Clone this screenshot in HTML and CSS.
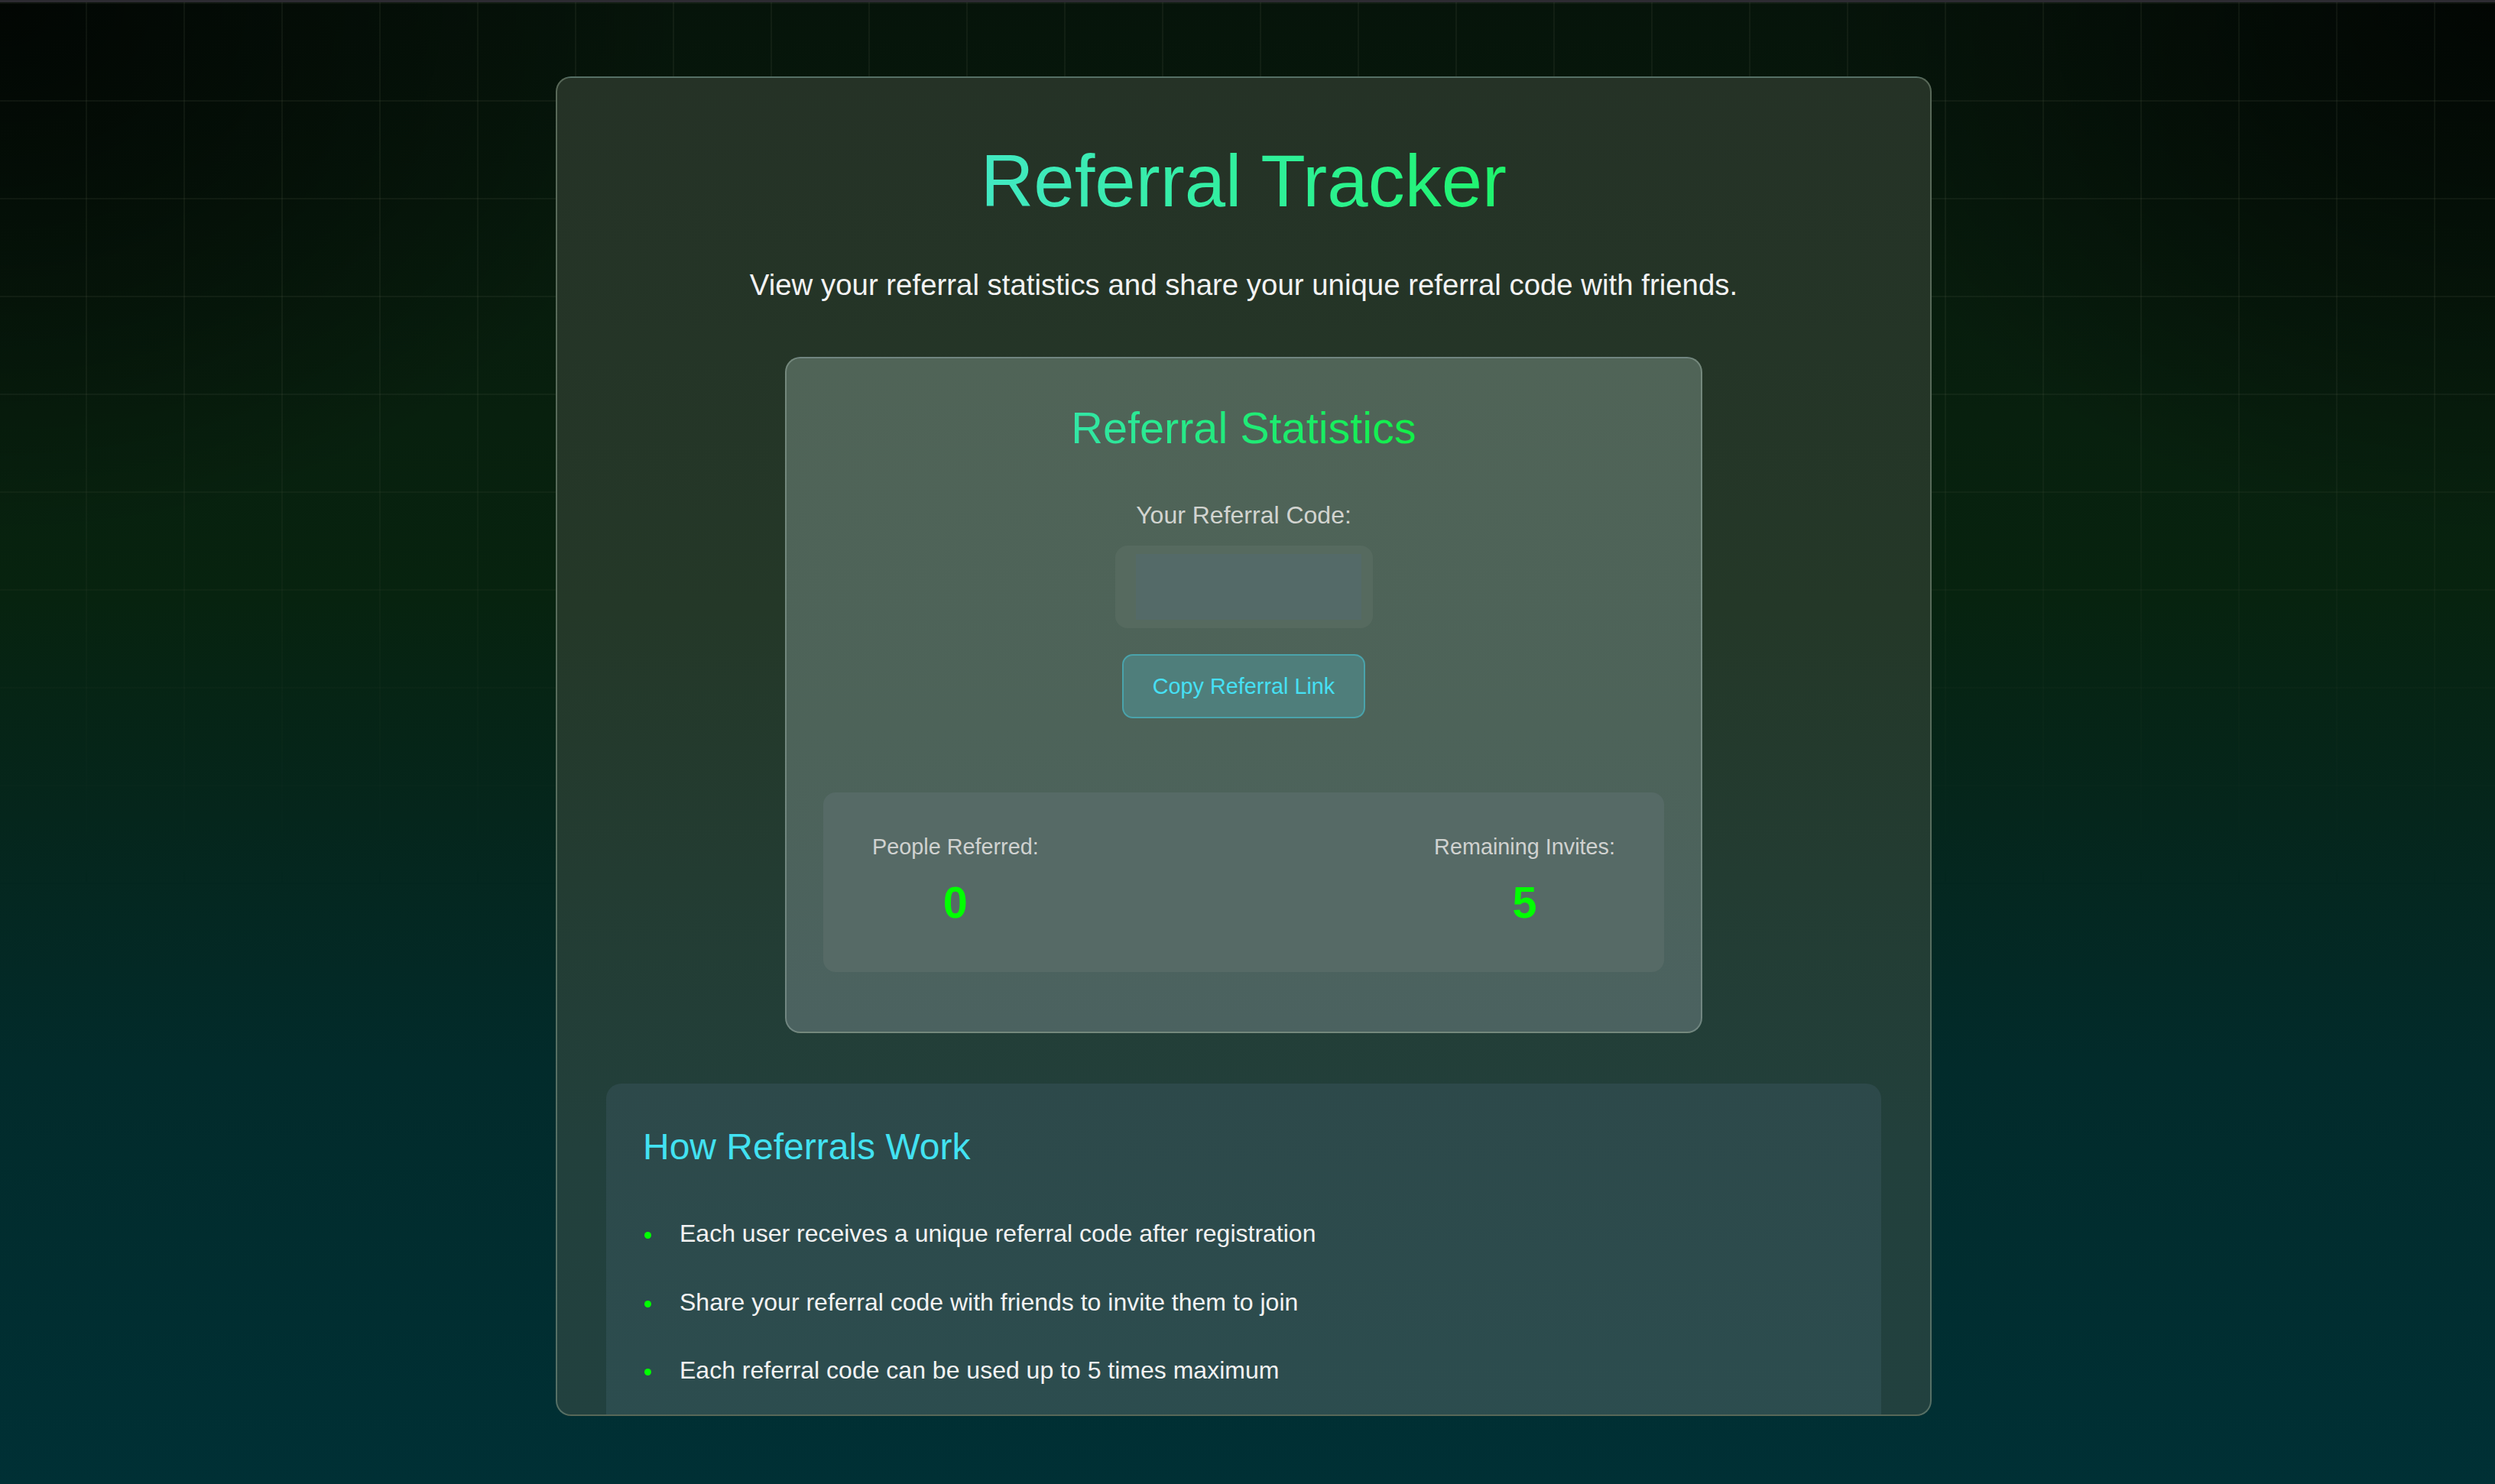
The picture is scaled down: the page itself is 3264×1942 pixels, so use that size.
FILE: index.html
```html
<!DOCTYPE html>
<html lang="en">
<head>
<meta charset="utf-8">
<title>Referral Tracker</title>
<link rel="stylesheet" href="styles.css">
</head>
<body>
<div class="topbar"></div>
<div class="page">
  <div class="grid"></div>
  <main class="card">
    <h1 class="title"><span class="grad-title">Referral Tracker</span></h1>
    <p class="subtitle">View your referral statistics and share your unique referral code with friends.</p>

    <section class="stats-card">
      <h2 class="stats-title"><span class="grad-stats">Referral Statistics</span></h2>
      <div class="code-label">Your Referral Code:</div>
      <div class="code-box"><div class="code-value"></div></div>
      <button class="copy-btn">Copy Referral Link</button>
      <div class="stats-row">
        <div class="stat">
          <div class="stat-label">People Referred:</div>
          <div class="stat-num">0</div>
        </div>
        <div class="stat">
          <div class="stat-label">Remaining Invites:</div>
          <div class="stat-num">5</div>
        </div>
      </div>
    </section>

    <section class="how">
      <h3 class="how-title">How Referrals Work</h3>
      <ul class="how-list">
        <li>Each user receives a unique referral code after registration</li>
        <li>Share your referral code with friends to invite them to join</li>
        <li>Each referral code can be used up to 5 times maximum</li>
      </ul>
    </section>
  </main>
</div>
</body>
</html>
```

FILE: styles.css
```css
* { box-sizing: border-box; }
html, body { margin: 0; padding: 0; }
body {
  font-family: "Liberation Sans", Arial, sans-serif;
  background: #003035;
  width: 3264px;
  height: 1942px;
  overflow: hidden;
}
.topbar {
  height: 3px;
  background: #2d2b32;
}
.page {
  position: relative;
  height: 1939px;
  padding: 97px 10px 0 0;
  background:
    radial-gradient(ellipse 900px 700px at 0 0, rgba(0,0,0,0.7), rgba(0,0,0,0) 100%),
    radial-gradient(ellipse 900px 700px at 100% 0, rgba(0,0,0,0.7), rgba(0,0,0,0) 100%),
    linear-gradient(180deg, #06140a 0%, #08200e 28%, #07230f 40%, #05261c 55%, #022b2b 72%, #003035 100%);
}
.grid {
  position: absolute;
  inset: 0;
  background-image:
    linear-gradient(90deg, rgba(80,90,70,0.16) 2px, transparent 2px),
    linear-gradient(180deg, rgba(80,90,70,0.16) 2px, transparent 2px);
  background-size: 128px 128px;
  background-position: 112px 0;
  -webkit-mask-image: linear-gradient(180deg, #000 0%, #000 25%, transparent 60%);
  mask-image: linear-gradient(180deg, #000 0%, #000 25%, transparent 60%);
  pointer-events: none;
}
.card {
  position: relative;
  width: 1800px;
  height: 1753px;
  margin: 0 auto;
  padding: 80px 64px 0;
  border: 2px solid rgba(150,170,150,0.45);
  border-radius: 20px;
  overflow: hidden;
  background: linear-gradient(180deg, #253226 0%, #243828 40%, #22403c 80%, #22413f 100%);
  text-align: center;
}
.title {
  margin: 0;
  font-size: 96px;
  font-weight: 400;
  line-height: 110px;
}
.grad-title {
  background: linear-gradient(90deg, #42e8c2 0%, #2ff09a 55%, #1ff46c 100%);
  -webkit-background-clip: text;
  background-clip: text;
  color: transparent;
}
.subtitle {
  margin: 59px 0 0;
  font-size: 38.4px;
  line-height: 44px;
  color: #f2f2f2;
}
.stats-card {
  width: 1200px;
  margin: 72px auto 0;
  padding: 58px 48px 78px;
  border: 2px solid rgba(160,180,170,0.45);
  border-radius: 20px;
  background: linear-gradient(180deg, #506457 0%, #4d6359 55%, #4b6260 100%);
}
.stats-title {
  margin: 0;
  font-size: 57.6px;
  font-weight: 400;
  line-height: 66px;
}
.grad-stats {
  background: linear-gradient(90deg, #33e6a6 0%, #20eb78 50%, #12f047 100%);
  -webkit-background-clip: text;
  background-clip: text;
  color: transparent;
}
.code-label {
  margin-top: 63px;
  font-size: 32px;
  line-height: 37px;
  color: #d2d4d0;
}
.code-box {
  width: 337px;
  height: 108px;
  margin: 21px auto 0;
  padding: 11px 15px 11px 27px;
  border-radius: 16px;
  background: #566a5f;
}
.code-value {
  height: 86px;
  background: #546a68;
}
.copy-btn {
  display: block;
  width: 318px;
  height: 84px;
  margin: 34px auto 0;
  padding: 0;
  border: 2px solid #4aa3ab;
  border-radius: 14px;
  background: #4f7e7b;
  color: #46e0f4;
  font-family: "Liberation Sans", Arial, sans-serif;
  font-size: 28.8px;
  cursor: pointer;
}
.stats-row {
  display: flex;
  justify-content: space-between;
  margin-top: 97px;
  height: 235px;
  padding: 55px 64px 0;
  border-radius: 16px;
  background: #566a66;
}
.stat { text-align: center; }
.stat-label {
  font-size: 28.8px;
  line-height: 33px;
  color: #d0d2d0;
}
.stat-num {
  margin-top: 23px;
  font-size: 57.6px;
  font-weight: 700;
  line-height: 66px;
  color: #00ff00;
}
.how {
  margin-top: 66px;
  padding: 55px 48px 48px;
  border-radius: 20px;
  background: linear-gradient(180deg, #2d494a 0%, #2c4d4f 100%);
  text-align: left;
}
.how-title {
  margin: 0;
  font-size: 48px;
  font-weight: 400;
  line-height: 55px;
  color: #42e2f2;
}
.how-list {
  list-style: none;
  margin: 42px 0 0;
  padding: 0;
}
.how-list li {
  position: relative;
  padding: 26.25px 0 26.25px 48px;
  font-size: 32px;
  line-height: 37px;
  color: #f2f2f2;
}
.how-list li::before {
  content: "";
  position: absolute;
  left: 2px;
  top: 42px;
  width: 9px;
  height: 9px;
  border-radius: 50%;
  background: #00ff00;
}
```
